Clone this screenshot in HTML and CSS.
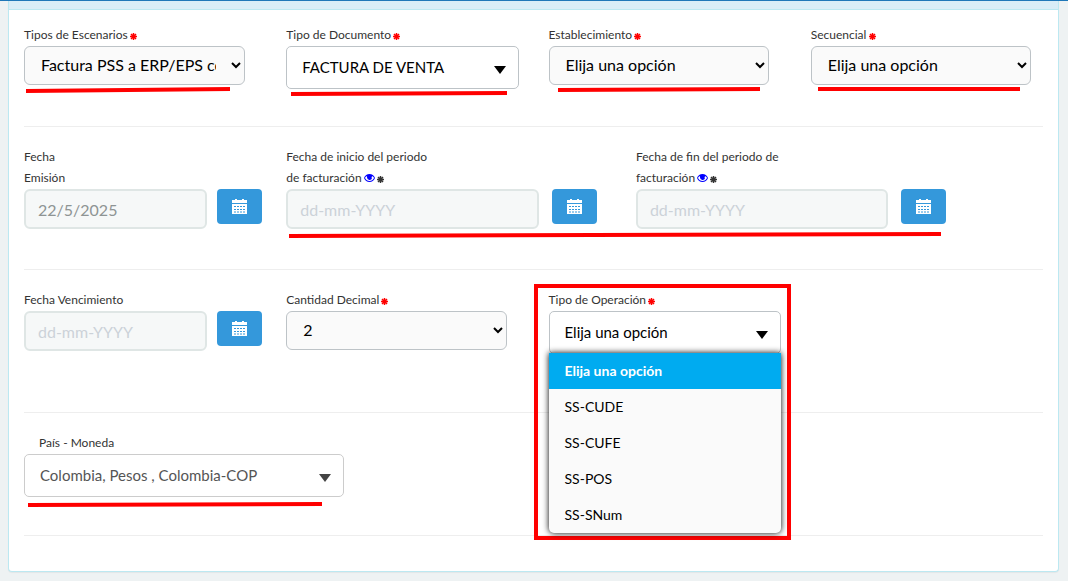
FILE: index.html
```html
<!DOCTYPE html>
<html lang="es">
<head>
  <meta charset="utf-8">
  <meta name="viewport" content="width=device-width, initial-scale=1">
  <title>Factura</title>
  <link rel="stylesheet" href="styles.css">
</head>
<body>
  <!-- iconos -->
  <svg class="sprite" aria-hidden="true">
    <symbol id="i-req" viewBox="0 0 14 14">
      <path d="M7 0v14M0 7h14M2 2l10 10M12 2L2 12" stroke="currentColor" stroke-width="3" fill="none"/>
    </symbol>
    <symbol id="i-eye" viewBox="0 0 22 16">
      <path fill="currentColor" fill-rule="evenodd" d="M11 0C6 0 2 3 0 8c2 5 6 8 11 8s9-3 11-8c-2-5-6-8-11-8zM11 14C7 14 4 12 2 8c1-2 2-3 4-4a5 5 0 1 0 10 0c2 1 3 2 4 4-2 4-5 6-9 6z"/>
      <path fill="currentColor" d="M11 2a5 5 0 1 0 5 6l-5-1z"/>
    </symbol>
    <symbol id="i-cal" viewBox="0 0 15 15">
      <path fill="#fff" d="M0 1h3V0h2v1h5V0h2v1h3v3H0zM0 5h15v10H0z"/>
      <path stroke="#3498db" stroke-dasharray="2 1" d="M2 7.500h11M2 10.500h11M2 13h11"/>
    </symbol>
  </svg>

  <div class="panel">
    <div class="panel-heading"></div>
    <form class="panel-body">

      <div class="row">
        <div class="col-3">
          <label for="escenario">Tipos de Escenarios <svg class="req"><use href="#i-req"/></svg></label>
          <select id="escenario" class="native">
            <option>Factura PSS a ERP/EPS contributivo</option>
          </select>
          <svg class="mark mark-escenario"><line x1="0" y1="4" x2="100%" y2="2"/></svg>
        </div>
        <div class="col-3">
          <label for="documento">Tipo de Documento <svg class="req"><use href="#i-req"/></svg></label>
          <div class="combo">
            <select id="documento"><option>FACTURA DE VENTA</option></select>
          </div>
          <svg class="mark mark-documento"><line x1="0" y1="3" x2="100%" y2="2"/></svg>
        </div>
        <div class="col-3">
          <label for="establecimiento">Establecimiento <svg class="req"><use href="#i-req"/></svg></label>
          <select id="establecimiento" class="native">
            <option>Elija una opción</option>
          </select>
          <svg class="mark mark-establecimiento"><line x1="0" y1="3" x2="100%" y2="2"/></svg>
        </div>
        <div class="col-3">
          <label for="secuencial">Secuencial <svg class="req"><use href="#i-req"/></svg></label>
          <select id="secuencial" class="native">
            <option>Elija una opción</option>
          </select>
          <svg class="mark mark-secuencial"><line x1="0" y1="2" x2="100%" y2="2"/></svg>
        </div>
      </div>

      <hr>

      <div class="row row-fechas">
        <div class="col-3">
          <label for="emision">Fecha<br>Emisión</label>
          <div class="fecha">
            <input type="text" id="emision" value="22/5/2025" readonly>
            <button type="button" class="btn-cal" aria-label="Fecha Emisión"><svg><use href="#i-cal"/></svg></button>
          </div>
        </div>
        <div class="col-4">
          <label for="inicio">Fecha de inicio del periodo<br>de facturación <svg class="eye"><use href="#i-eye"/></svg> <svg class="req dark"><use href="#i-req"/></svg></label>
          <div class="fecha">
            <input type="text" id="inicio" placeholder="dd-mm-YYYY" readonly>
            <button type="button" class="btn-cal" aria-label="Fecha de inicio"><svg><use href="#i-cal"/></svg></button>
          </div>
        </div>
        <div class="col-4">
          <label for="fin">Fecha de fin del periodo de<br>facturación <svg class="eye"><use href="#i-eye"/></svg> <svg class="req dark"><use href="#i-req"/></svg></label>
          <div class="fecha">
            <input type="text" id="fin" placeholder="dd-mm-YYYY" readonly>
            <button type="button" class="btn-cal" aria-label="Fecha de fin"><svg><use href="#i-cal"/></svg></button>
          </div>
        </div>
        <svg class="mark mark-fechas"><line x1="0" y1="4" x2="100%" y2="2"/></svg>
      </div>

      <hr>

      <div class="row row-operacion">
        <div class="col-3">
          <label for="vencimiento">Fecha Vencimiento</label>
          <div class="fecha">
            <input type="text" id="vencimiento" placeholder="dd-mm-YYYY" readonly>
            <button type="button" class="btn-cal" aria-label="Fecha Vencimiento"><svg><use href="#i-cal"/></svg></button>
          </div>
        </div>
        <div class="col-3">
          <label for="decimal">Cantidad Decimal <svg class="req"><use href="#i-req"/></svg></label>
          <select id="decimal" class="native">
            <option>2</option>
          </select>
        </div>
        <div class="col-3">
          <label for="operacion">Tipo de Operación <svg class="req"><use href="#i-req"/></svg></label>
          <div class="combo">
            <select id="operacion"><option>Elija una opción</option></select>
            <ul class="options">
              <li><button type="button" class="active">Elija una opción</button></li>
              <li><button type="button">SS-CUDE</button></li>
              <li><button type="button">SS-CUFE</button></li>
              <li><button type="button">SS-POS</button></li>
              <li><button type="button">SS-SNum</button></li>
            </ul>
          </div>
          <div class="mark-box"></div>
        </div>
      </div>

      <hr>

      <div class="row row-moneda">
        <div class="col-4">
          <label for="moneda" class="indent">País - Moneda</label>
          <div class="combo gray">
            <select id="moneda"><option>Colombia, Pesos , Colombia-COP</option></select>
          </div>
          <svg class="mark mark-moneda"><line x1="0" y1="3" x2="100%" y2="2"/></svg>
        </div>
      </div>

      <hr>
    </form>
  </div>
</body>
</html>
```
FILE: styles.css
```css
* {
  box-sizing: border-box;
}

body {
  margin: 0;
  padding: 0 9px 9px 8px;
  border-top: 1px solid #1f77b8;
  background-color: #eef2f3;
  color: #333;
  font-family: Lato, "Liberation Sans", sans-serif;
  font-size: 12px;
  line-height: 21px;
}

.sprite {
  display: none;
}

.panel {
  background-color: #fff;
  border: 1px solid #bce8f1;
  border-top: 0;
  border-radius: 0 0 4px 4px;
  box-shadow: 0 1px 1px rgba(0, 0, 0, 0.05);
}

.panel-heading {
  height: 9px;
  background-color: #d9edf7;
  border-bottom: 1px solid #bce8f1;
}

.panel-body {
  padding: 14px 15px 16px;
}

.row {
  display: grid;
  grid-template-columns: repeat(12, minmax(0, 1fr));
  column-gap: 30px;
  padding-bottom: 17px;
  position: relative;
}

.row-fechas {
  padding-bottom: 20px;
}

.row-operacion {
  padding-bottom: 38px;
}

.row-moneda {
  padding-bottom: 18px;
}

.col-3 {
  grid-column: span 3;
  position: relative;
}

.col-4 {
  grid-column: span 4;
  position: relative;
}

hr {
  margin: 20px 0 19px;
  border: 0;
  border-top: 1px solid #eee;
}

label {
  display: block;
  margin-bottom: 1px;
}

label.indent {
  padding-left: 15px;
}

.req {
  width: 7px;
  height: 7px;
  margin-left: -1px;
  color: #f00;
  vertical-align: -1px;
}

.req.dark {
  color: #333;
}

.eye {
  width: 11px;
  height: 8px;
  margin-left: -1px;
  color: #00f;
}

.native {
  display: block;
  width: 95%;
  height: 39px;
  padding: 0 12px 2px;
  border: 1px solid #bdc3c7;
  border-radius: 6px;
  background-color: #fafafa;
  color: #000;
  font-family: inherit;
  font-size: 16px;
}

.combo {
  position: relative;
}

.combo select {
  display: block;
  width: 100%;
  height: 43px;
  padding: 0 40px 2px 15px;
  border: 1px solid #bdc3c7;
  border-radius: 5px;
  background-color: #fff;
  color: #000;
  font-family: inherit;
  font-size: 15px;
  appearance: none;
}

.combo::after {
  content: "";
  position: absolute;
  top: 20px;
  right: 13px;
  border: 6px solid transparent;
  border-top: 8px solid #000;
  border-bottom: 0;
  pointer-events: none;
}

.combo.gray select {
  color: #555;
  border-color: #ccc;
}

.combo.gray::after {
  border-top-color: #444;
}

.options {
  position: absolute;
  top: 42px;
  left: 0;
  width: 100%;
  margin: 0;
  padding: 0;
  list-style: none;
  background-color: #fafafa;
  border-radius: 0 0 5px 5px;
  box-shadow: 0 0 6px #000;
  overflow: hidden;
  z-index: 2;
}

.options button {
  display: block;
  width: 100%;
  height: 36px;
  padding: 0 16px 2px;
  border: 0;
  background: none;
  color: #000;
  font-family: inherit;
  font-size: 14px;
  text-align: left;
}

.options .active {
  background-color: #00abf0;
  color: #fff;
  font-weight: bold;
}

.fecha {
  display: flex;
  align-items: flex-start;
}

.fecha input {
  flex: none;
  width: 79%;
  height: 40px;
  margin-right: 4%;
  padding: 0 12px;
  border: 2px solid #dfe6e5;
  border-radius: 6px;
  background-color: #f6f8f8;
  color: #8e9494;
  font-family: inherit;
  font-size: 16px;
}

.fecha input::placeholder {
  color: #ccd2d8;
}

.btn-cal {
  flex: none;
  display: flex;
  align-items: center;
  justify-content: center;
  width: 45px;
  height: 35px;
  padding: 0;
  border: 0;
  border-radius: 4px;
  background-color: #3498db;
}

.btn-cal svg {
  width: 15px;
  height: 15px;
}

/* marcas rojas sobre los campos obligatorios */
.mark {
  position: absolute;
  height: 6px;
}

.mark line {
  stroke: #f00;
  stroke-width: 4;
}

.mark-escenario {
  top: 63px;
  left: 2px;
  width: 88%;
}

.mark-documento {
  top: 67px;
  left: 5px;
  width: 93%;
}

.mark-establecimiento {
  top: 63px;
  left: 9px;
  width: 87%;
}

.mark-secuencial {
  top: 63px;
  left: 7px;
  width: 87%;
}

.mark-fechas {
  top: 86px;
  left: 26%;
  width: 64%;
}

.mark-moneda {
  top: 70px;
  left: 4px;
  width: 92%;
}

.mark-box {
  position: absolute;
  top: -5px;
  left: -15px;
  right: -10px;
  height: 256px;
  border: 4px solid #f00;
  z-index: 1;
  pointer-events: none;
}
```
